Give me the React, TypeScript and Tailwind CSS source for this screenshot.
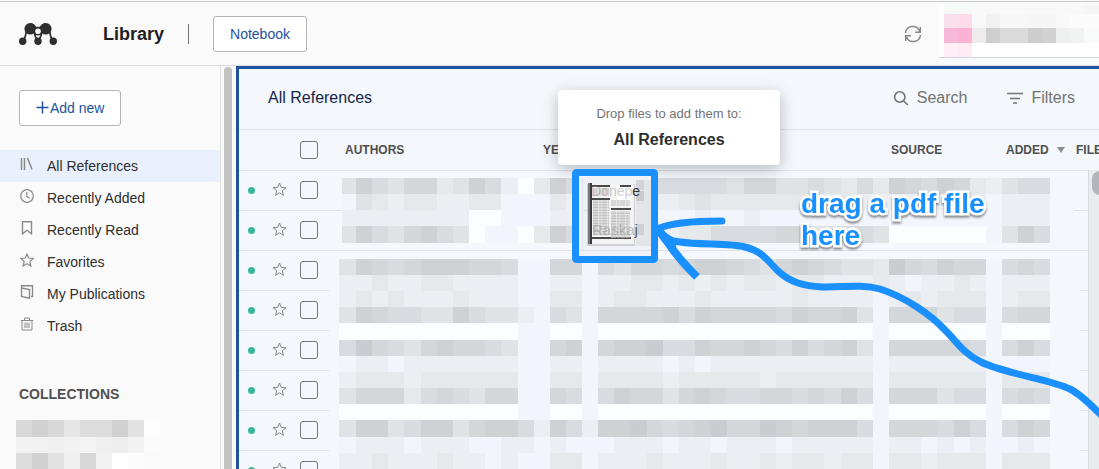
import React from "react";

const STAR =
  "M7.5 1 L9.2 5.4 L14 5.7 L10.3 8.7 L11.5 13.4 L7.5 10.8 L3.5 13.4 L4.7 8.7 L1 5.7 L5.8 5.4 Z";

function StarIcon() {
  return (
    <svg width="15" height="15" viewBox="0 0 15 15" fill="none" stroke="currentColor" strokeWidth="1">
      <path d={STAR} />
    </svg>
  );
}

function Logo() {
  return (
    <svg width="38" height="22" viewBox="0 0 38 22" fill="#2e2e2e" aria-label="Mendeley">
      <g stroke="#2e2e2e" strokeWidth="1.7" fill="none">
        <path d="M7.2 8.5 Q7 14 4 18" />
        <path d="M15 9 Q15.5 13.5 19 18" />
        <path d="M23 9 Q22.5 13.5 19 18" />
        <path d="M30.8 8.5 Q31 14 34 18" />
      </g>
      <path d="M12 0 Q15.5 0.5 17 3.6 Q19 4.6 21 3.6 Q22.5 0.5 26 0 L26 8 L12 8 Z" />
      <circle cx="11.2" cy="5.8" r="5.8" />
      <circle cx="26.8" cy="5.8" r="5.8" />
      <circle cx="19" cy="8.2" r="4.4" />
      <circle cx="3.7" cy="18.2" r="3.7" />
      <circle cx="19" cy="18.2" r="3.7" />
      <circle cx="34.3" cy="18.2" r="3.7" />
      <circle cx="19" cy="8.2" r="2.8" fill="#fafafa" />
    </svg>
  );
}

const navItems: { label: string; icon: React.ReactNode }[] = [
  {
    label: "All References",
    icon: <path d="M1.5 1v12M4.5 1v12M7.5 1L12 12.5" strokeWidth="1.5" />,
  },
  {
    label: "Recently Added",
    icon: (
      <>
        <circle cx="7" cy="7" r="6.3" />
        <path d="M6.8 3v4.4l3 1.8" />
      </>
    ),
  },
  { label: "Recently Read", icon: <path d="M2.5 .8h9v12L7 9.3L2.5 12.8Z" strokeWidth="1.4" /> },
  {
    label: "Favorites",
    icon: <path d="M7 .9L8.7 5l4.7.4-3.6 3 1.1 4.7L7 10.6l-3.9 2.5 1.1-4.7-3.6-3L5.3 5Z" />,
  },
  {
    label: "My Publications",
    icon: <path d="M1.5 3L9.5 4.5V13.3L1.5 11.5ZM1.5 3V.8H12.5V11.5H11" strokeWidth="1.4" />,
  },
  {
    label: "Trash",
    icon: <path d="M.8 3.5h12.4M4.5 3.5V1h5v2.5M2 3.5V13h10V3.5M5 5.5v5.5M7 5.5v5.5M9 5.5v5.5" strokeWidth="1" />,
  },
];

const shades = [
  "none",
  "#fafeff",
  "#f2f5fb",
  "#ebeef3",
  "#e5e9ec",
  "#dfe3e6",
  "#d8dbdf",
  "#d4d7da",
  "#cfd2d5",
  "#c9ccd0",
];

type Band = { y: number; h: number; cells: string };

const band = (y: number, h: number, ...parts: string[]): Band => ({ y, h, cells: parts.join("") });

// Parts: authors, year and gap, title, gap and source, gap and added.
const upperBands: Band[] = [
  band(178, 16, "5865774586314", "863", "34466666577556546", "4876874", "3566"),
  band(194, 16, "2543443344222", "433", "33333454444443343", "3333333", "2333"),
  band(210, 16, "3333333311222", "333", "33322232232222222", "2222222", "2333"),
  band(226, 17, "5865786512214", "863", "34433446666775566", "5111111", "2586"),
];

const lowerBands: Band[] = [
  band(259, 16, "5876788877622", "772", "65776788765787655", "4976877", "2676"),
  band(275, 16, "3343344333322", "332", "33443434344344333", "4323343", "2333"),
  band(291, 16, "3434333433322", "442", "34433343333343333", "2343444", "2344"),
  band(307, 16, "5876655865532", "652", "77778687777687785", "2777566", "2677"),
  band(323, 17, "1111111111122", "112", "11111111111111111", "2111111", "2111"),
  band(340, 16, "6976578776522", "782", "78896687787686785", "2777776", "2686"),
  band(356, 16, "2332333333322", "332", "33332323333333333", "2333333", "2222"),
  band(372, 16, "3444344444422", "442", "44443444443444444", "2444444", "2444"),
  band(388, 16, "5777467657722", "762", "68775787667767686", "2777566", "2676"),
  band(404, 16, "1111111111122", "112", "11111111111111111", "2111111", "2111"),
  band(420, 17, "5885688578863", "863", "88976789779878886", "2777686", "2687"),
  band(437, 16, "2333233322332", "322", "23332332333233333", "2332323", "2232"),
  band(453, 16, "3343334332322", "442", "33343334334344344", "2443444", "2444"),
];

const edge = (i: number) => (i === 0 ? 339 : Math.round(356 + (i - 1) * 16.15));

function Bands({ bands, start }: { bands: Band[]; start: number }) {
  return (
    <>
      {bands.map((b) =>
        b.cells.split("").map((c, i) => {
          const x = i === 0 ? start : edge(i);
          return (
            <rect key={`${b.y}-${i}`} x={x} y={b.y} width={edge(i + 1) - x} height={b.h} fill={shades[Number(c)]} />
          );
        }),
      )}
    </>
  );
}

function RedactedRows() {
  return (
    <g shapeRendering="crispEdges">
      <rect x="342" y="176" width="732" height="69" fill="#f4f7fc" />
      <rect x="329" y="257" width="751" height="212" fill="#f4f7fc" />
      <Bands bands={upperBands} start={342} />
      <Bands bands={lowerBands} start={339} />
    </g>
  );
}

function DraggedFile() {
  const leftLines = Array.from({ length: 22 }, (_, i) => 201 + i * 1.6);
  const rightLines = Array.from({ length: 17 }, (_, i) => 212 + i * 1.6);
  return (
    <g>
      <rect x="579" y="176" width="72" height="80" fill="#eff1f7" />
      <g fill="#dfe2e6">
        <rect x="582" y="178" width="1" height="72" />
        <rect x="582" y="210" width="54" height="1" />
        <rect x="579" y="250" width="72" height="1" />
      </g>
      <g shapeRendering="crispEdges">
        <rect x="636" y="180" width="15" height="66" fill="#e3e5e9" />
        <rect x="636" y="180" width="8" height="10" fill="#d2d4d8" />
        <rect x="636" y="191" width="8" height="10" fill="#c9cbcf" />
        <rect x="636" y="224" width="8" height="11" fill="#cdcfd3" />
      </g>
      <rect x="587" y="184" width="48" height="62" fill="#6b6b6b" opacity="0.25" />
      <rect x="588" y="183" width="46" height="61" fill="#f3f3f3" />
      <rect x="588" y="183" width="3" height="61" fill="#777777" />
      <rect x="590" y="183" width="2" height="61" fill="#3a3a3a" />
      <g fill="#4a4a4a">
        <rect x="592" y="185" width="18" height="2" />
        <rect x="592" y="198" width="18" height="2" />
        <rect x="611" y="208" width="20" height="2" />
        <rect x="592" y="237" width="39" height="2" />
      </g>
      <g stroke="#b2b2b2" strokeWidth="0.9" strokeDasharray="5 0.6 3 0.5">
        {leftLines.map((y) => (
          <path key={y} d={`M593 ${y}H609`} />
        ))}
        {rightLines.map((y) => (
          <path key={y} d={`M611 ${y}H630`} />
        ))}
        <path d="M593 189H609M593 191H609M593 193H609M593 195H609M611 201H630M611 203H630M611 205H630" />
      </g>
      <rect x="617" y="185" width="14" height="15" fill="#ffffff" />
      <rect x="620" y="185" width="11" height="2" fill="#4a4a4a" />
      <g fontFamily="Liberation Sans, sans-serif">
        <text x="591" y="196" fontSize="14" fill="#8f8f8f" fillOpacity="0.45">
          Donep<tspan fill="#333333" fillOpacity="1">e</tspan>
        </text>
        <text x="592" y="235" fontSize="15" fill="#8f8f8f" fillOpacity="0.55">
          Raska<tspan fill="#333333" fillOpacity="0.8">j</tspan>
        </text>
      </g>
    </g>
  );
}

function Annotation() {
  return (
    <g fill="none" stroke="#1a90ff" strokeWidth="7">
      <rect x="575.5" y="172.5" width="79" height="87" rx="1" />
      <path d="M657 229 C672 222 700 221 722 221" strokeLinecap="round" />
      <path d="M657 228 L669 244 C676 255 685 265 697 277" strokeWidth="8" />
      <path d="M657 228 C664 236 668 241 680 242 C700 245 730 243 745 247 C762 251 768 261 777 270 C790 283 805 286 822 287 C845 287 862 284 880 289 C905 297 930 314 945 330 C958 343 964 354 981 362 C1005 374 1050 379 1070 389 C1082 395 1093 407 1104 418" />
      <path d="M657 226 L672 238 L676 247 L668 243 Z" fill="#1a90ff" strokeWidth="1" />
    </g>
  );
}

const accountCells = [
  { y: 0, h: 9, c: ["#f5faf8", "#f5faf8", "#f8f8f8", "#f8f8f8", "#f8f8f8", "#f8f8f8", "#f8f8f8", "#f8f8f8", "#f8f8f8", "#f8f8f8", "#f5f5f5", "#f5f5f5"] },
  { y: 9, h: 14, c: ["#f9deeb", "#fddbe8", "#f8f8f8", "#f0f1f1", "#f6f6f6", "#f6f6f6", "#f5f5f5", "#f5f5f5", "#f9f9f9", "#fbfbfb", "#fbfbfb", "#fbfbfb"] },
  { y: 23, h: 15, c: ["#f6b8d6", "#fcb2d2", "#edebec", "#cdcfcf", "#dadada", "#dadada", "#cdcdcd", "#d1d1d1", "#eeefef", "#f0f1f1", "#f8fbfa", "#f8fbfa"] },
  { y: 38, h: 14, c: ["#ffeef5", "#ffebf4", "#ffffff", "#ffffff", "#ffffff", "#ffffff", "#ffffff", "#ffffff", "#ffffff", "#ffffff", "#ffffff", "#ffffff"] },
];

const collectionCells = [
  ["#d9d9d9", "#d0d0d0", "#d8d8d8", "#e6e6e6", "#dcdcdc", "#dcdcdc", "#d0d0d0", "#e2e2e2", "#fdfdfd"],
  ["#f2f2f2", "#f2f2f2", "#f0f0f0", "#f1f1f1", "#f3f3f3", "#f0f0f0", "#eeeeee", "#f2f2f2", "#fbfbfb"],
  ["#dcdcdc", "#d0d0d0", "#e1e1e1", "#f0f0f0", "#d7d7d7", "#f1f1f1", "#ffffff", "#fcfcfc", "#fafafa"],
];

export default function App() {
  return (
    <div className="flex h-screen flex-col overflow-hidden bg-[#fafafa] font-['Liberation_Sans',Arial,sans-serif] text-sm text-[#2e2e2e]">
      <header className="mt-px flex shrink-0 items-start border-y border-t-[#c8c8c8] border-b-[#dcdcdc] pl-[19px]">
        <div className="flex h-[63px] items-center">
          <Logo />
          <h1 className="ml-[46px] text-lg font-bold text-[#1f1f1f]">Library</h1>
          <div className="ml-6 h-5 w-px bg-[#737373]" />
          <button type="button" className="ml-6 h-9 rounded-[3px] border border-[#b5b5b5] bg-white px-4 text-[#2153a0]">
            Notebook
          </button>
        </div>
        <div className="ml-auto flex h-[63px] items-center gap-[17px]">
          <button type="button" aria-label="Sync" className="text-[#8a8a8a]">
            <svg width="18" height="18" viewBox="0 0 18 18" fill="none" stroke="currentColor" strokeWidth="1.5">
              <path d="M1.5 8 A7.3 7.3 0 0 1 15.6 6.2M16.3 2v5.3h-5.2" />
              <path d="M16.5 10 A7.3 7.3 0 0 1 2.4 11.8M1.7 16v-5.3h5.2" />
            </svg>
          </button>
          <svg className="mb-1" width="160" height="54" viewBox="0 0 160 54" shapeRendering="crispEdges" aria-label="Account">
            <rect y="0" width="160" height="53" fill="#fdfefe" />
            <rect y="52" width="160" height="1" fill="#cdd5e2" />
            {accountCells.map((r) =>
              r.c.map((fill, i) => <rect key={`${r.y}-${i}`} x={5 + i * 14} y={r.y} width="14" height={r.h} fill={fill} />),
            )}
          </svg>
        </div>
      </header>

      <div className="flex min-h-0 flex-1">
        <aside className="w-[221px] shrink-0 overflow-hidden border-r border-[#e0e0e0] pt-6">
          <button
            type="button"
            className="ml-[19px] flex h-9 items-center rounded-[3px] border border-[#b5b5b5] bg-white px-4 text-[#2153a0]"
          >
            <svg width="14" height="14" viewBox="0 0 14 14" fill="none" stroke="currentColor" strokeWidth="1.5">
              <path d="M6.5 .5v12M.5 6.5h12" />
            </svg>
            Add new
          </button>
          <nav className="mt-6">
            {navItems.map((item, i) => (
              <a
                key={item.label}
                href="#"
                className={
                  i === 0
                    ? "flex h-8 items-center gap-[13px] bg-[#e9f0fb] pl-5"
                    : "flex h-8 items-center gap-[13px] pl-5"
                }
              >
                <svg
                  className="mb-1 text-[#8a8a8a]"
                  width="14"
                  height="14"
                  viewBox="0 0 14 14"
                  fill="none"
                  stroke="currentColor"
                  strokeWidth="1.2"
                >
                  {item.icon}
                </svg>
                {item.label}
              </a>
            ))}
          </nav>
          <h2 className="mt-[42px] pl-[19px] font-bold text-[#505050]">COLLECTIONS</h2>
          <svg className="mt-4 ml-4" width="144" height="49" viewBox="0 0 144 49" shapeRendering="crispEdges" aria-hidden="true">
            {collectionCells.map((row, r) =>
              row.map((fill, i) => (
                <rect key={`${r}-${i}`} x={i * 16} y={[0, 17, 33][r]} width="16" height={[17, 16, 16][r]} fill={fill} />
              )),
            )}
          </svg>
        </aside>
        <div className="w-[15px] shrink-0 bg-[#fafafa] pt-px pl-[3px]">
          <div className="h-full w-2 rounded-t-full bg-[#c2c2c2]" />
        </div>

        <main className="relative min-w-0 flex-1 overflow-hidden border-t-3 border-l-3 border-[#2153a0] bg-[#f4f7fc]">
          <div className="flex h-[61px] items-center border-b border-[#dfe2e7] pr-6 pb-0.5 pl-[29px] text-base">
            <h2 className="text-[#14254a]">All References</h2>
            <div className="ml-auto flex gap-10 text-[#737373]">
              <button type="button" className="flex items-center gap-2">
                <svg width="16" height="16" viewBox="0 0 16 16" fill="none" stroke="currentColor" strokeWidth="1.6">
                  <circle cx="6.8" cy="7" r="5.2" />
                  <path d="M10.5 10.8L14.8 15" />
                </svg>
                Search
              </button>
              <button type="button" className="flex items-center gap-2">
                <svg width="16" height="16" viewBox="0 0 16 16" fill="none" stroke="currentColor" strokeWidth="1.6">
                  <path d="M0 3.5h16M3 8.5h10M6 13h4" />
                </svg>
                Filters
              </button>
            </div>
          </div>

          <table className="w-full table-fixed border-collapse text-left whitespace-nowrap">
            <colgroup>
              <col className="w-[27px]" />
              <col className="w-[28px]" />
              <col className="w-[39px]" />
              <col className="w-[198px]" />
              <col className="w-[68px]" />
              <col />
              <col className="w-[115px]" />
              <col className="w-[70px]" />
              <col className="w-[35px]" />
            </colgroup>
            <thead>
              <tr className="h-10 border-b border-[#dfe2e7] text-xs text-[#505050]">
                <td />
                <td />
                <td className="p-0 pl-[6px]">
                  <input
                    type="checkbox"
                    aria-label="Select all"
                    className="block size-[18px] appearance-none rounded-[3px] border border-[#75787c]"
                  />
                </td>
                <th className="pl-3">AUTHORS</th>
                <th className="pl-3">YEAR</th>
                <th />
                <th className="pl-3">SOURCE</th>
                <th className="p-0 pl-3">
                  <span className="flex items-center gap-2">
                    ADDED
                    <svg className="shrink-0" width="8" height="6" viewBox="0 0 8 6" fill="#8a8d92">
                      <path d="M0 0h8L4 6Z" />
                    </svg>
                  </span>
                </th>
                <th className="pl-3">FILE</th>
              </tr>
            </thead>
            <tbody>
              {Array.from({ length: 8 }, (_, i) => (
                <tr key={i} className="h-10 border-b border-[#dfe2e7]">
                  <td className="p-0 pl-[9px]">
                    <span className="block size-[7px] rounded-full bg-[#38b79d]" />
                  </td>
                  <td className="p-0 pl-[6px]">
                    <button type="button" aria-label="Favorite" className="block pb-0.5 text-[#85888c]">
                      <StarIcon />
                    </button>
                  </td>
                  <td className="p-0 pl-[6px]">
                    <input
                      type="checkbox"
                      aria-label="Select reference"
                      className="block size-[18px] appearance-none rounded-[3px] border border-[#75787c]"
                    />
                  </td>
                  <td />
                  <td />
                  <td />
                  <td />
                  <td />
                  <td />
                </tr>
              ))}
            </tbody>
          </table>

          <div className="absolute top-[101px] right-0 bottom-0 w-[11px] border-l border-[#d9dce0] bg-[#e9ebef] pt-[1px] pl-[3px]">
            <div className="h-6 w-2 rounded-l-full bg-[#b2b5b9]" />
          </div>

          <svg
            className="pointer-events-none absolute top-0 left-0 max-w-none"
            width="860"
            height="400"
            viewBox="239 69 860 400"
            aria-hidden="true"
          >
            <RedactedRows />
          </svg>

          <div className="absolute top-[21px] left-1/2 w-[222px] -translate-x-1/2 rounded bg-white pt-4 pb-[13px] text-center shadow-[0_4px_16px_rgba(0,0,0,0.25)]">
            <p className="text-[13px] leading-4 text-[#737373]">Drop files to add them to:</p>
            <p className="mt-1.5 text-base leading-6 font-bold">All References</p>
          </div>

          <svg
            className="pointer-events-none absolute top-0 left-0 max-w-none"
            width="860"
            height="400"
            viewBox="239 69 860 400"
            aria-hidden="true"
          >
            <DraggedFile />
            <Annotation />
          </svg>

          <p className="absolute top-[119px] left-[562px] w-[200px] text-[28px] leading-8 font-bold text-[#1a90ff] drop-shadow-[0_2px_1px_rgba(0,0,0,0.45)] [-webkit-text-stroke:5px_white] [paint-order:stroke_fill]">
            drag a pdf file here
          </p>
        </main>
      </div>
    </div>
  );
}
